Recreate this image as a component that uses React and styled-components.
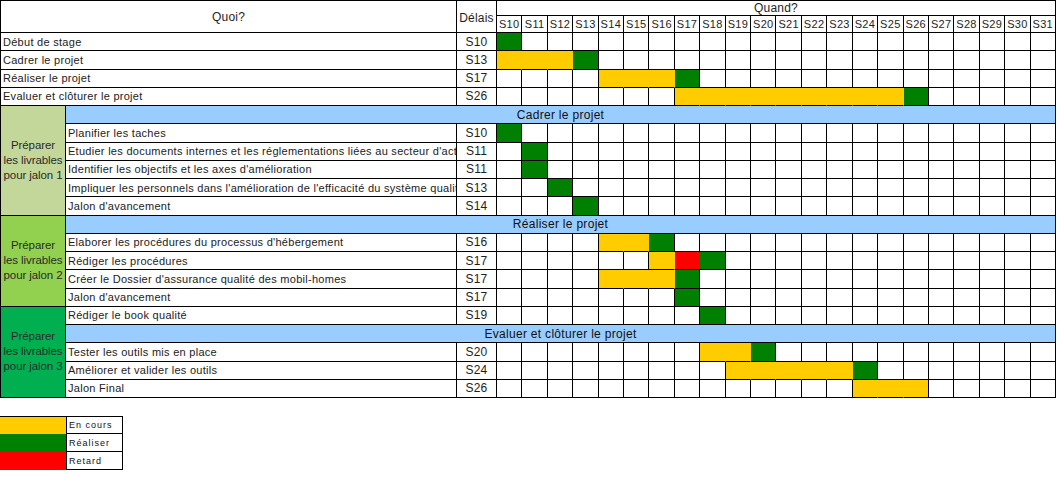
import React from 'react';
import styled, { createGlobalStyle } from 'styled-components';

const FILL = { y: '#ffcc00', g: '#008000', r: '#ff0000' };
const WEEKS = Array.from({ length: 22 }, (_, i) => i + 10);

const Global = createGlobalStyle`
  html, body { margin: 0; padding: 0; background: #ffffff; }
  body { font-family: "Liberation Sans", Arial, sans-serif; color: #1e1e1e; }
`;

const Page = styled.div`
  display: flex;
  flex-direction: column;
  gap: 18px;
  width: 1056px;
`;

const Sheet = styled.div`
  display: grid;
  grid-template-columns: 65px 391px 40px repeat(22, 1fr);
  grid-template-rows: 15px 17px repeat(20, 18.25px);
  width: 1056px;
  box-sizing: border-box;
  border-top: 1px solid #000;
  border-left: 1px solid #000;
`;

const Cell = styled.div`
  box-sizing: border-box;
  min-width: 0;
  border-right: 1px solid #000;
  border-bottom: 1px solid #000;
  display: flex;
  align-items: center;
  overflow: hidden;
  white-space: nowrap;
`;

const HeadCell = styled(Cell)`
  grid-column: ${p => p.$col};
  grid-row: ${p => p.$row};
  justify-content: center;
  font-size: 12px;
  letter-spacing: 0.2px;
  padding-top: ${p => (p.$low ? '2px' : '0')};
`;

const WeekLabel = styled(Cell)`
  grid-row: 2;
  justify-content: center;
  font-size: 11px;
  letter-spacing: 0.3px;
`;

const TaskCell = styled(Cell)`
  grid-column: ${p => (p.$wide ? '1 / 3' : '2 / 3')};
  padding-left: 2px;
  font-size: 11px;
  letter-spacing: 0.28px;
  color: #222;
`;

const DelayCell = styled(Cell)`
  grid-column: 3;
  justify-content: center;
  font-size: 12px;
  letter-spacing: 0.2px;
`;

const WeekCell = styled(Cell)`
  background: ${p => p.$fill || '#ffffff'};
  border-right-color: ${p => (p.$joined ? 'transparent' : '#000')};
`;

const Band = styled(Cell)`
  grid-column: 2 / -1;
  justify-content: center;
  background: #99ccff;
  font-size: 12px;
  letter-spacing: 0.3px;
  color: #111;
`;

const JalonCell = styled(Cell)`
  grid-column: 1;
  grid-row: span ${p => p.$rows};
  flex-direction: column;
  justify-content: center;
  background: ${p => p.$bg};
  font-size: 11.5px;
  letter-spacing: -0.1px;
  line-height: 15px;
  color: #2a2a2a;
`;

const JalonLine = styled.span`
  display: block;
  text-align: center;
  white-space: nowrap;
`;

const Legend = styled.div`
  display: grid;
  grid-template-columns: 66px 57px;
  grid-auto-rows: 18px;
  width: 123px;
`;

const Swatch = styled.div`
  background: ${p => p.$fill};
  border-top: ${p => (p.$first ? '1px solid #000' : 'none')};
`;

const LegendLabel = styled.div`
  box-sizing: border-box;
  display: flex;
  align-items: center;
  padding-left: 2px;
  border: 1px solid #000;
  border-top: ${p => (p.$first ? '1px solid #000' : 'none')};
  font-size: 9px;
  letter-spacing: 1px;
  color: #111;
`;

const bars = (...specs) => {
  const out = {};
  specs.forEach(([a, b, c]) => {
    for (let w = a; w <= b; w++) out[w] = c;
  });
  return out;
};

const ROWS = [
  { wide: true, label: 'Début de stage', delay: 'S10', bars: bars([10, 10, 'g']) },
  { wide: true, label: 'Cadrer le projet', delay: 'S13', bars: bars([10, 12, 'y'], [13, 13, 'g']) },
  { wide: true, label: 'Réaliser le projet', delay: 'S17', bars: bars([14, 16, 'y'], [17, 17, 'g']) },
  { wide: true, label: 'Evaluer et clôturer le projet', delay: 'S26', bars: bars([17, 25, 'y'], [26, 26, 'g']) },
  { band: 'Cadrer le projet', jalon: { n: 1, rows: 6, bg: '#c4d79b' } },
  { label: 'Planifier les taches', delay: 'S10', bars: bars([10, 10, 'g']) },
  { label: "Etudier les documents internes et les réglementations liées au secteur d'activité", delay: 'S11', bars: bars([11, 11, 'g']) },
  { label: "Identifier les objectifs et les axes d'amélioration", delay: 'S11', bars: bars([11, 11, 'g']) },
  { label: "Impliquer les personnels dans l'amélioration de l'efficacité du système qualité", delay: 'S13', bars: bars([12, 12, 'g']) },
  { label: "Jalon d'avancement", delay: 'S14', bars: bars([13, 13, 'g']) },
  { band: 'Réaliser le projet', jalon: { n: 2, rows: 5, bg: '#92d050' } },
  { label: "Elaborer les procédures du processus d'hébergement", delay: 'S16', bars: bars([14, 15, 'y'], [16, 16, 'g']) },
  { label: 'Rédiger les procédures', delay: 'S17', bars: bars([16, 16, 'y'], [17, 17, 'r'], [18, 18, 'g']) },
  { label: "Créer le Dossier d'assurance qualité des mobil-homes", delay: 'S17', bars: bars([14, 16, 'y'], [17, 17, 'g']) },
  { label: "Jalon d'avancement", delay: 'S17', bars: bars([17, 17, 'g']) },
  { label: 'Rédiger le book qualité', delay: 'S19', bars: bars([18, 18, 'g']), jalon: { n: 3, rows: 5, bg: '#00b050' } },
  { band: 'Evaluer et clôturer le projet' },
  { label: 'Tester les outils mis en place', delay: 'S20', bars: bars([18, 19, 'y'], [20, 20, 'g']) },
  { label: 'Améliorer et valider les outils', delay: 'S24', bars: bars([19, 23, 'y'], [24, 24, 'g']) },
  { label: 'Jalon Final', delay: 'S26', bars: bars([24, 26, 'y']) },
];

const LEGEND = [
  { fill: FILL.y, label: 'En cours' },
  { fill: FILL.g, label: 'Réaliser' },
  { fill: FILL.r, label: 'Retard' },
];

function Row({ row }) {
  const jalon = row.jalon ? (
    <JalonCell $rows={row.jalon.rows} $bg={row.jalon.bg}>
      <JalonLine>Préparer</JalonLine>
      <JalonLine>les livrables</JalonLine>
      <JalonLine>pour jalon {row.jalon.n}</JalonLine>
    </JalonCell>
  ) : null;
  if (row.band) {
    return (
      <>
        {jalon}
        <Band>{row.band}</Band>
      </>
    );
  }
  return (
    <>
      {jalon}
      <TaskCell $wide={row.wide}>{row.label}</TaskCell>
      <DelayCell>{row.delay}</DelayCell>
      {WEEKS.map(w => {
        const c = row.bars[w];
        const next = row.bars[w + 1];
        return <WeekCell key={w} $fill={c ? FILL[c] : null} $joined={!!c && !!next} />;
      })}
    </>
  );
}

export default function App() {
  return (
    <>
      <Global />
      <Page>
        <Sheet>
          <HeadCell $col="1 / 3" $row="1 / 3">Quoi?</HeadCell>
          <HeadCell $col="3" $row="1 / 3" $low>Délais</HeadCell>
          <HeadCell $col="4 / -1" $row="1">Quand?</HeadCell>
          {WEEKS.map(w => (
            <WeekLabel key={w}>S{w}</WeekLabel>
          ))}
          {ROWS.map((r, i) => (
            <Row key={i} row={r} />
          ))}
        </Sheet>
        <Legend>
          {LEGEND.map((l, i) => (
            <React.Fragment key={l.label}>
              <Swatch $fill={l.fill} $first={i === 0} />
              <LegendLabel $first={i === 0}>{l.label}</LegendLabel>
            </React.Fragment>
          ))}
        </Legend>
      </Page>
    </>
  );
}
